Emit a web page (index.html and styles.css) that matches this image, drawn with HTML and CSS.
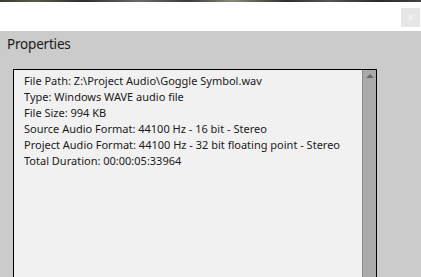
FILE: index.html
```html
<!DOCTYPE html>
<html>
<head>
<meta charset="utf-8">
<link rel="stylesheet" href="styles.css">
</head>
<body>
<div class="strip"></div>
<div class="titlebar">
  <div class="close">x</div>
</div>
<div class="panel">
  <div class="panel-title">Properties</div>
  <div class="props">
    <div class="props-text">
      <div class="line">File Path: Z:\Project Audio\Goggle Symbol.wav</div>
      <div class="line">Type: Windows WAVE audio file</div>
      <div class="line">File Size: 994 KB</div>
      <div class="line">Source Audio Format: 44100 Hz - 16 bit - Stereo</div>
      <div class="line">Project Audio Format: 44100 Hz - 32 bit floating point - Stereo</div>
      <div class="line">Total Duration: 00:00:05:33964</div>
    </div>
    <div class="scrollbar">
      <div class="arrow"></div>
    </div>
  </div>
</div>
</body>
</html>
```

FILE: styles.css
```css
html, body {
  margin: 0;
  padding: 0;
  height: 100%;
  background: #ffffff;
  overflow: hidden;
}
body {
  display: flex;
  flex-direction: column;
  font-family: "Noto Sans", "Open Sans", sans-serif;
}
.strip {
  height: 2px;
  background: linear-gradient(90deg, #3a3a34 0%, #5a5a48 8%, #2e2e2e 20%, #6b6b6b 33%, #3b3b3b 45%, #8a8a7a 55%, #2f2f2f 68%, #555 78%, #2a2a2a 90%, #444 100%);
}
.titlebar {
  height: 29px;
  display: flex;
  justify-content: flex-end;
  align-items: flex-start;
}
.close {
  width: 19px;
  height: 19px;
  margin-top: 6px;
  margin-right: 1px;
  background: #e6e6e6;
  color: #f8f8f8;
  font-size: 9px;
  line-height: 18px;
  text-align: center;
}
.panel {
  flex: 1;
  background: #cbcbcb;
  display: flex;
  flex-direction: column;
}
.panel-title {
  font-size: 13.5px;
  letter-spacing: -0.2px;
  line-height: 20px;
  color: #1a1a1a;
  padding: 3px 0 0 7px;
  height: 38px;
  box-sizing: border-box;
}
.props {
  flex: 1;
  margin-left: 13px;
  width: 364px;
  box-sizing: border-box;
  border-left: 1px solid #000;
  border-top: 1px solid #000;
  border-right: 1px solid #000;
  background: #f1f1f1;
  display: flex;
}
.props-text {
  flex: 1;
  padding: 3px 0 0 10px;
  font-size: 11px;
  color: #1a1a1a;
}
.line {
  height: 16px;
  line-height: 16px;
  white-space: nowrap;
}
.scrollbar {
  width: 13px;
  background: #aaaaaa;
  border-left: 1px solid #8c8c8c;
  display: flex;
  justify-content: center;
}
.arrow {
  margin-top: 4px;
  width: 0;
  height: 0;
  border-left: 4px solid transparent;
  border-right: 4px solid transparent;
  border-bottom: 4px solid #6a6a6a;
}
```
